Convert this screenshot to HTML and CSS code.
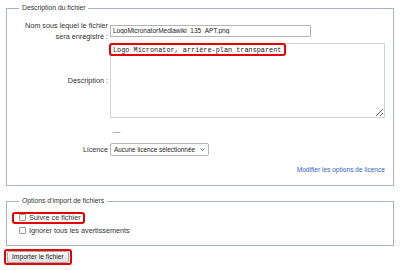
FILE: index.html
```html
<!DOCTYPE html>
<html lang="fr">

<head>
  <meta charset="UTF-8">
  <title>Téléverser un fichier</title>
  <link rel="stylesheet" href="styles.css">
</head>

<body>

  <!-- description block -->
  <fieldset class="box">
    <legend>Description du fichier</legend>

    <div class="row row-name">
      <label class="row-label" for="dest">Nom sous lequel le fichier<br>sera enregistré :</label>
      <div class="row-field">
        <input type="text" id="dest" class="text-input" value="LogoMicronatorMediawiki_135_APT.png">
      </div>
    </div>

    <div class="row row-desc">
      <label class="row-label" for="desc">Description :</label>
      <div class="row-field desc-wrap">
        <textarea id="desc" class="desc-box">Logo Micronator, arrière-plan transparent</textarea>
        <span class="mark mark-over"></span>
      </div>
    </div>

    <div class="row row-dash">
      <span class="row-label"></span>
      <div class="row-field">—</div>
    </div>

    <div class="row row-licence">
      <label class="row-label" for="licence">Licence</label>
      <div class="row-field">
        <div class="select-wrap">
          <select id="licence" class="licence-select">
            <option>Aucune licence sélectionnée</option>
          </select>
          <svg class="select-arrow" width="5" height="3" viewBox="0 0 5 3">
            <path d="M0.5 0.5 L2.5 2.5 L4.5 0.5" fill="none" stroke="#555" stroke-width="0.8"/>
          </svg>
        </div>
      </div>
    </div>

    <div class="row-link">
      <a href="#" class="link">Modifier les options de licence</a>
    </div>
  </fieldset>

  <!-- options block -->
  <fieldset class="box box-options">
    <legend>Options d'import de fichiers</legend>
    <div class="check-row">
      <label class="check mark"><input type="checkbox"> Suivre ce fichier</label>
    </div>
    <div class="check-row">
      <label class="check"><input type="checkbox"> Ignorer tous les avertissements</label>
    </div>
  </fieldset>

  <div class="mark mark-btn"><button class="btn">Importer le fichier</button></div>

</body>

</html>
```

FILE: styles.css
```css
/* page */
body {
  margin: 0;
  padding: 3px 6px;
  font-family: "Liberation Sans", Arial, sans-serif;
  font-size: 7.25px;
  line-height: 11px;
  color: #222;
  background-color: #fff;
}

/* fieldsets */
.box {
  margin: 0;
  padding: 6px 8px 10px;
  border: 1px solid #a7b3c9;
}

.box legend {
  padding: 0 3px;
  margin-left: 4px;
  font-size: 6.8px;
  line-height: 10px;
  color: #333;
}

.box-options {
  margin-top: 10px;
  padding: 5px 8px 8px;
}

/* form rows */
.row {
  display: flex;
  align-items: center;
}

.row-label {
  width: 93px;
  padding-right: 2px;
  text-align: right;
  color: #333;
}

.row-field {
  flex: 1;
}

.row-name {
  margin-top: 1px;
}

.row-desc {
  margin-top: 1px;
}

.row-dash {
  margin-top: 8px;
  color: #666;
}

.row-dash .row-field {
  padding-left: 3px;
}

.row-licence {
  margin-top: 6px;
}

.row-link {
  margin-top: 8px;
  text-align: right;
}

.text-input {
  box-sizing: border-box;
  width: 201px;
  height: 12px;
  margin: 0;
  padding: 0 2px 1px;
  border: 1px solid #b5b5b5;
  font-family: "Liberation Sans", Arial, sans-serif;
  font-size: 6.5px;
  color: #222;
}

.desc-wrap {
  position: relative;
}

.desc-box {
  box-sizing: border-box;
  display: block;
  width: 100%;
  height: 75px;
  margin: 0;
  padding: 2px 2px;
  border: 1px solid #d4d4d4;
  resize: vertical;
  font-family: "Liberation Mono", "Courier New", monospace;
  font-size: 6.85px;
  line-height: 9px;
  color: #222;
}

/* licence select */
.select-wrap {
  position: relative;
  display: inline-block;
}

.licence-select {
  -webkit-appearance: none;
  appearance: none;
  height: 13px;
  margin: 0;
  padding: 0 12px 0 3px;
  border: 1px solid #b5b5b5;
  border-radius: 2px;
  background-color: #fff;
  font-family: "Liberation Sans", Arial, sans-serif;
  font-size: 6.4px;
  color: #222;
}

.select-arrow {
  position: absolute;
  right: 4px;
  top: 5px;
  pointer-events: none;
}

.link {
  font-size: 6.6px;
  color: #3366cc;
  text-decoration: none;
}

/* checkboxes */
.check-row {
  height: 13px;
  display: flex;
  align-items: center;
}

.check {
  display: inline-flex;
  align-items: center;
  gap: 3px;
  padding: 0 2px 0 4px;
  color: #333;
}

.check input {
  -webkit-appearance: none;
  appearance: none;
  box-sizing: border-box;
  width: 7px;
  height: 7px;
  margin: 0;
  border: 1px solid #999;
  border-radius: 1px;
  background-color: #fff;
}

/* red highlight marks */
.mark {
  border: 2px solid #e60000;
  border-radius: 3px;
}

.check.mark {
  margin-left: -3px;
  padding: 0 2px 0 5px;
  height: 12px;
  box-sizing: border-box;
}

.mark-over {
  position: absolute;
  left: -1px;
  top: 0;
  width: 177px;
  height: 13px;
  box-sizing: border-box;
}

.mark-btn {
  width: max-content;
  margin: 3px 0 0 -2px;
  padding: 0 1px;
}

.btn {
  display: block;
  height: 12px;
  margin: 0;
  padding: 0 4px;
  border: 1px solid #aaa;
  border-radius: 2px;
  background: linear-gradient(#fcfcfc, #e0e0e0);
  font-family: "Liberation Sans", Arial, sans-serif;
  font-size: 6.7px;
  line-height: 10px;
  color: #222;
}
```
